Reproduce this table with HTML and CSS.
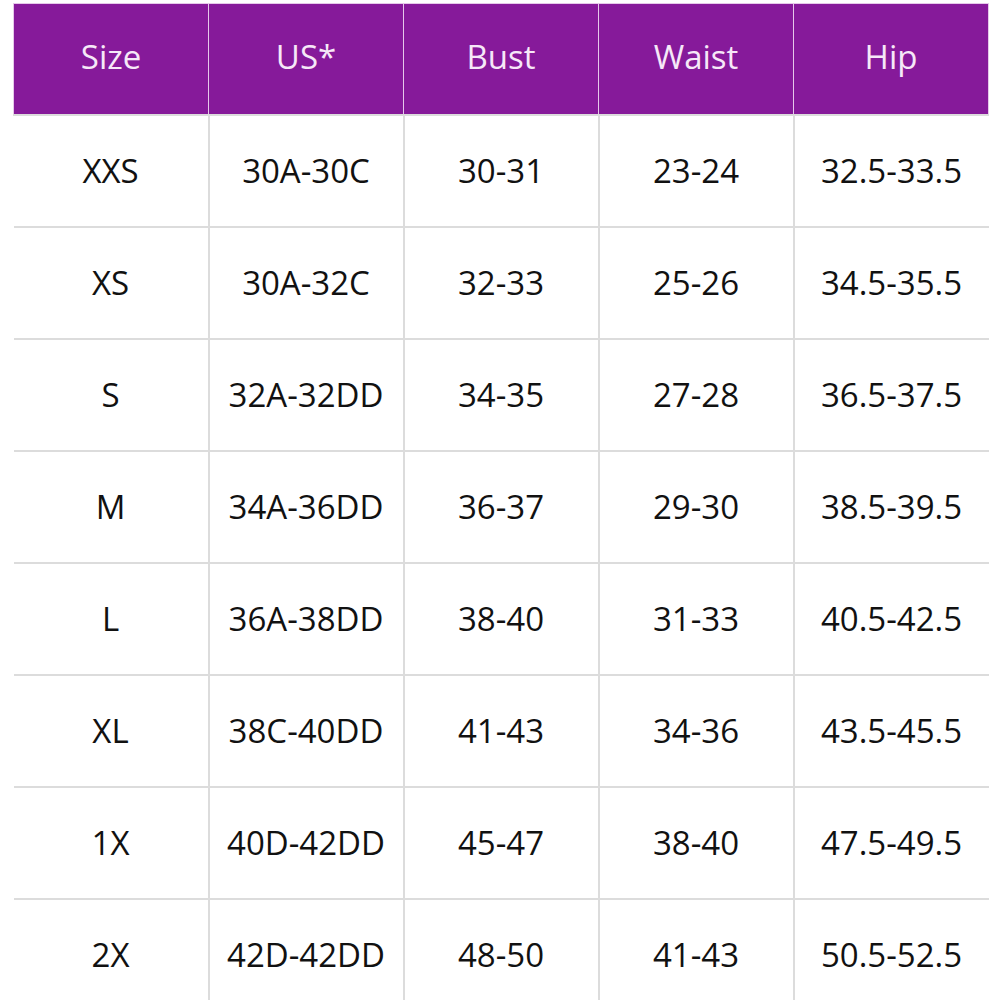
FILE: index.html
```html
<!DOCTYPE html>
<html>
<head>
<meta charset="utf-8">
<link rel="stylesheet" href="styles.css">
</head>
<body>
<table class="size-table">
  <thead>
    <tr><th>Size</th><th>US*</th><th>Bust</th><th>Waist</th><th>Hip</th></tr>
  </thead>
  <tbody>
    <tr><td>XXS</td><td>30A-30C</td><td>30-31</td><td>23-24</td><td>32.5-33.5</td></tr>
    <tr><td>XS</td><td>30A-32C</td><td>32-33</td><td>25-26</td><td>34.5-35.5</td></tr>
    <tr><td>S</td><td>32A-32DD</td><td>34-35</td><td>27-28</td><td>36.5-37.5</td></tr>
    <tr><td>M</td><td>34A-36DD</td><td>36-37</td><td>29-30</td><td>38.5-39.5</td></tr>
    <tr><td>L</td><td>36A-38DD</td><td>38-40</td><td>31-33</td><td>40.5-42.5</td></tr>
    <tr><td>XL</td><td>38C-40DD</td><td>41-43</td><td>34-36</td><td>43.5-45.5</td></tr>
    <tr><td>1X</td><td>40D-42DD</td><td>45-47</td><td>38-40</td><td>47.5-49.5</td></tr>
    <tr><td>2X</td><td>42D-42DD</td><td>48-50</td><td>41-43</td><td>50.5-52.5</td></tr>
  </tbody>
</table>
</body>
</html>
```
FILE: styles.css
```css
html, body {
  margin: 0;
  padding: 0;
  background: #ffffff;
}
body {
  padding: 3px 0 0 13px;
  font-family: "Open Sans", "Liberation Sans", sans-serif;
}
.size-table {
  border-collapse: collapse;
  table-layout: fixed;
  width: 974px;
}
.size-table th,
.size-table td {
  width: 194px;
  text-align: center;
  vertical-align: middle;
  font-size: 33px;
  font-weight: 400;
  padding: 0;
  line-height: 1;
}
.size-table th {
  height: 104px;
  padding-bottom: 6px;
  background: #861a9a;
  color: #f6e8f8;
  border: 1px solid #e6c8ea;
}
.size-table td {
  height: 108px;
  padding-bottom: 2px;
  color: #111111;
  border: 2px solid #dcdcdc;
}
.size-table td:first-child { border-left: none; }
.size-table td:last-child { border-right: none; }
.size-table tbody tr:last-child td { border-bottom: none; }
```
